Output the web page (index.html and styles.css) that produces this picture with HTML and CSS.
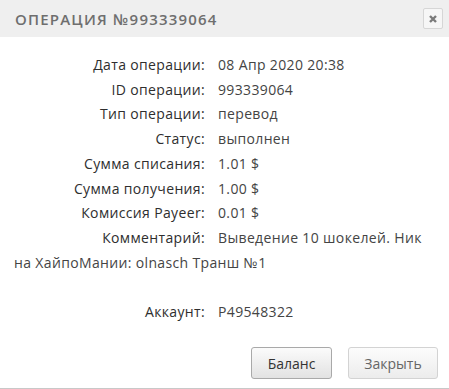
FILE: index.html
```html
<!DOCTYPE html>
<html lang="ru">
<head>
<meta charset="utf-8">
<link rel="stylesheet" href="styles.css">
</head>
<body>
<div class="dlg">
  <div class="hdr">
    <span class="title">Операция №993339064</span>
    <span class="close" aria-label="close">
      <svg width="10" height="10" viewBox="0 0 10 10"><path d="M2 2 L8 8 M8 2 L2 8" stroke="#7a7a7a" stroke-width="2.4" stroke-linecap="butt"/></svg>
    </span>
  </div>
  <div class="info">
    <span class="lbl">Дата операции:</span><span class="val">08 Апр 2020 20:38</span><br>
    <span class="lbl">ID операции:</span><span class="val">993339064</span><br>
    <span class="lbl">Тип операции:</span><span class="val">перевод</span><br>
    <span class="lbl">Статус:</span><span class="val">выполнен</span><br>
    <span class="lbl">Сумма списания:</span><span class="val">1.01 $</span><br>
    <span class="lbl">Сумма получения:</span><span class="val">1.00 $</span><br>
    <span class="lbl">Комиссия Payeer:</span><span class="val">0.01 $</span><br>
    <span class="lbl">Комментарий:</span><span class="val">Выведение 10 шокелей. Ник на ХайпоМании: olnasch Транш №1</span><br>
    <br>
    <span class="lbl">Аккаунт:</span><span class="val">P49548322</span>
  </div>
  <div class="foot">
    <button class="btn">Баланс</button>
    <button class="btn btn-off">Закрыть</button>
  </div>
</div>
</body>
</html>
```
FILE: styles.css
```css
html, body { margin: 0; padding: 0; background: #fff; }
.dlg {
  width: 449px;
  height: 389px;
  display: flex;
  flex-direction: column;
  font-family: "Open Sans", sans-serif;
  border-bottom: 1px solid #c8c8c8;
  box-sizing: border-box;
}
.hdr {
  height: 37px;
  background: #efefef;
  display: flex;
  align-items: center;
  justify-content: space-between;
  padding: 0 6px 0 15px;
}
.title {
  text-transform: uppercase;
  color: #6e6e6e;
  font-size: 15px;
  font-weight: 600;
  letter-spacing: 1.2px;
}
.close {
  width: 18px;
  height: 19px;
  border: 1px solid #d6d6d6;
  border-radius: 2px;
  background: #f6f6f6;
  display: flex;
  align-items: center;
  justify-content: center;
}
.info {
  padding: 16px 14px 0 14px;
  font-size: 14px;
  letter-spacing: 0.35px;
  line-height: 24.7px;
  color: #3a3a3a;
  flex: 1;
}
.lbl {
  display: inline-block;
  width: 191px;
  text-align: right;
  margin-right: 13px;
  color: #2e2e2e;
  font-weight: 500;
}
.val { color: #444; }
.foot {
  display: flex;
  justify-content: flex-end;
  gap: 16px;
  padding: 0 11px 9px 0;
}
.btn {
  height: 32px;
  padding: 0 10px;
  border: 1px solid #a9a9a9;
  border-radius: 3px;
  background: linear-gradient(#fbfbfb, #e2e2e2);
  font-family: "Open Sans", sans-serif;
  font-size: 14px;
  color: #333;
}
.btn:first-child { width: 81px; }
.btn-off {
  width: 90px;
  border-color: #d3d3d3;
  color: #666;
  background: linear-gradient(#fcfcfc, #ececec);
}
```
